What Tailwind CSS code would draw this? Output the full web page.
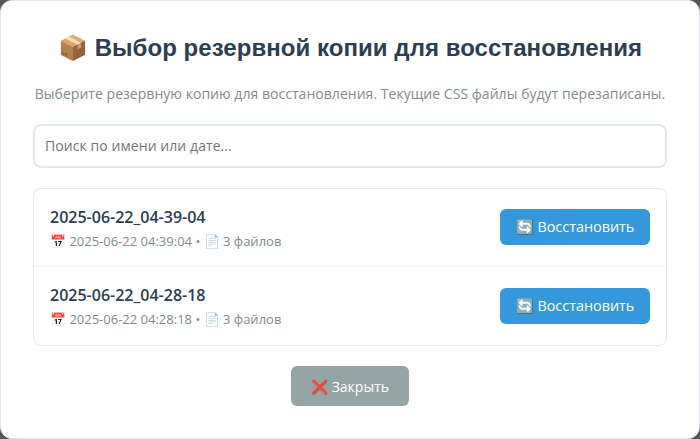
<!DOCTYPE html>
<html lang="ru">
<head>
  <meta charset="UTF-8" />
  <title>Выбор резервной копии</title>
  <script src="https://cdn.jsdelivr.net/npm/@tailwindcss/browser@4"></script>
</head>
<body class="w-[700px] h-[439px] overflow-hidden bg-[#555] font-['Open_Sans',sans-serif]">
  <div class="h-[439px] bg-white border border-[#e2e8f0] rounded-[12px] px-8 pt-[32px] flex flex-col">
    <h2 class="h-[30px] leading-[30px] text-center text-[24px] font-bold tracking-[0.05px] text-[#2c3e50] font-['Liberation_Sans',sans-serif]">📦 Выбор резервной копии для восстановления</h2>
    <p class="mt-[21px] h-[20px] leading-[20px] text-center text-[14px] tracking-[0.036px] text-[#7f8c8d]">Выберите резервную копию для восстановления. Текущие CSS файлы будут перезаписаны.</p>
    <input type="text" placeholder="Поиск по имени или дате..." class="mt-[20px] h-[44px] w-full px-[10px] pb-[2px] border-2 border-[#e2e8f0] rounded-[8px] text-[14px] tracking-[0.07px] text-[#2c3e50] placeholder:text-[#757575] outline-none" />

    <div class="mt-[20px] border border-[#e2e8f0] rounded-[8px] flex flex-col">
      <div class="h-[78px] pb-[1px] px-4 flex items-center justify-between border-b border-[#f1f5f9]">
        <div class="pt-[1px]">
          <div class="text-[16px] leading-[22px] font-semibold text-[#2c3e50]">2025-06-22_04-39-04</div>
          <div class="mt-[4px] text-[13px] leading-[18px] text-[#7f8c8d]">📅 2025-06-22 04:39:04 • 📄 3 файлов</div>
        </div>
        <button class="w-[150px] h-[36px] bg-[#3498db] text-white text-[14.4px] rounded-[6px]">🔄 Восстановить</button>
      </div>
      <div class="h-[78px] px-4 flex items-center justify-between">
        <div>
          <div class="text-[16px] leading-[22px] font-semibold text-[#2c3e50]">2025-06-22_04-28-18</div>
          <div class="mt-[4px] text-[13px] leading-[18px] text-[#7f8c8d]">📅 2025-06-22 04:28:18 • 📄 3 файлов</div>
        </div>
        <button class="w-[150px] h-[36px] bg-[#3498db] text-white text-[14.4px] rounded-[6px]">🔄 Восстановить</button>
      </div>
    </div>

    <div class="mt-[20px] flex justify-center">
      <button class="w-[118px] h-[40px] bg-[#95a5a6] text-white text-[14px] rounded-[6px]">❌ Закрыть</button>
    </div>
  </div>
</body>
</html>
